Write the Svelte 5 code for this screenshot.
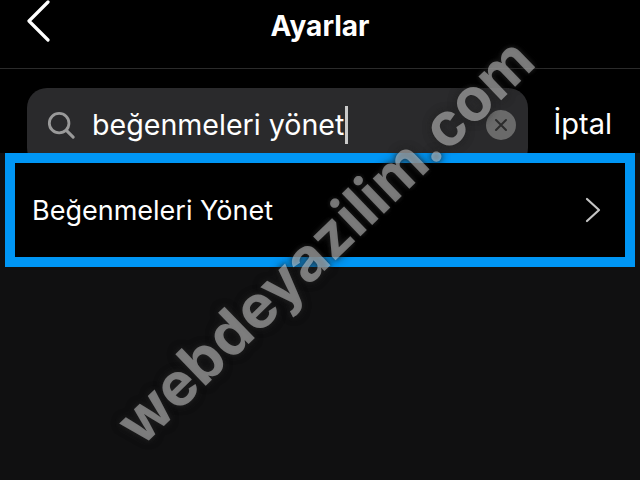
<script>
  const title = 'Ayarlar';
  const query = 'beğenmeleri yönet';
</script>

<div class="screen">
  <header class="top">
    <button class="back" aria-label="Geri">
      <svg width="26" height="42" viewBox="0 0 26 42"><path d="M22 2 L3 21 L22 40" fill="none" stroke="#fff" stroke-width="3.2" stroke-linecap="round" stroke-linejoin="round"/></svg>
    </button>
    <h1>{title}</h1>
  </header>

  <div class="search-row">
    <div class="search">
      <svg class="lens" width="30" height="30" viewBox="0 0 30 30"><circle cx="13" cy="13" r="10.5" fill="none" stroke="#9a9a9a" stroke-width="3"/><path d="M21 21 L28 28" stroke="#9a9a9a" stroke-width="3.2" stroke-linecap="round"/></svg>
      <span class="query">{query}</span><span class="caret"></span>
      <span class="clear">
        <svg width="14" height="14" viewBox="0 0 14 14"><path d="M2 2 L12 12 M12 2 L2 12" stroke="#2c2c2c" stroke-width="2" stroke-linecap="round"/></svg>
      </span>
    </div>
    <span class="cancel">İptal</span>
  </div>

  <div class="result">
    <span>Beğenmeleri Yönet</span>
    <svg width="16" height="26" viewBox="0 0 16 26"><path d="M2 2 L14 13 L2 24" fill="none" stroke="#c4c4c4" stroke-width="2.2" stroke-linecap="round" stroke-linejoin="round"/></svg>
  </div>

  <div class="mark">webdeyazilim.com</div>
</div>

<style>
  :global(body) { margin: 0; background: #101010; }
  .screen {
    position: relative;
    width: 640px;
    height: 480px;
    overflow: hidden;
    background: #101011;
    color: #fff;
    font-family: Inter, "Liberation Sans", sans-serif;
  }
  .top {
    height: 68px;
    background: #000;
    border-bottom: 1px solid #2b2b2b;
    display: flex;
    align-items: center;
    justify-content: center;
    position: relative;
  }
  .back {
    position: absolute;
    left: 26px;
    top: 0;
    padding: 0;
    border: 0;
    background: none;
    display: flex;
  }
  h1 {
    margin: 0 0 16px;
    font-size: 28px;
    font-weight: 700;
  }
  .search-row {
    height: 84px;
    background: #000;
    padding: 19px 28px 0 27px;
    box-sizing: border-box;
    display: flex;
    justify-content: space-between;
    align-items: flex-start;
  }
  .search {
    width: 501px;
    height: 80px;
    box-sizing: border-box;
    background: #2a2a2c;
    border-radius: 20px;
    padding: 0 12px 6px 20px;
    display: flex;
    align-items: center;
  }
  .lens { width: 28px; height: 28px; margin-right: 17px; }
  .query { font-size: 28.6px; line-height: 36px; white-space: nowrap; }
  .caret { width: 3px; height: 38px; background: #c9c9c9; margin-left: 1px; }
  .clear {
    margin-left: auto;
    width: 30px;
    height: 30px;
    border-radius: 50%;
    background: #6a6a6a;
    display: flex;
    align-items: center;
    justify-content: center;
  }
  .cancel { font-size: 29px; margin-top: 18px; }
  .result {
    position: relative;
    margin: 0 5px;
    height: 114px;
    box-sizing: border-box;
    border: 10px solid #0096f5;
    background: #000;
    padding: 0 24px 0 17px;
    display: flex;
    align-items: center;
    justify-content: space-between;
    font-size: 27px;
  }
  .mark {
    position: absolute;
    left: 126px;
    top: 399px;
    width: max-content;
    transform-origin: 0 50%;
    transform: rotate(-44deg);
    font-weight: 700;
    font-size: 60px;
    line-height: 66px;
    white-space: nowrap;
    color: rgba(255,255,255,0.42);
    text-shadow: 0 0 4px rgba(36,36,36,0.6), 0 0 8px rgba(36,36,36,0.5), 0 0 10px rgba(36,36,36,0.35);
    pointer-events: none;
  }
</style>
